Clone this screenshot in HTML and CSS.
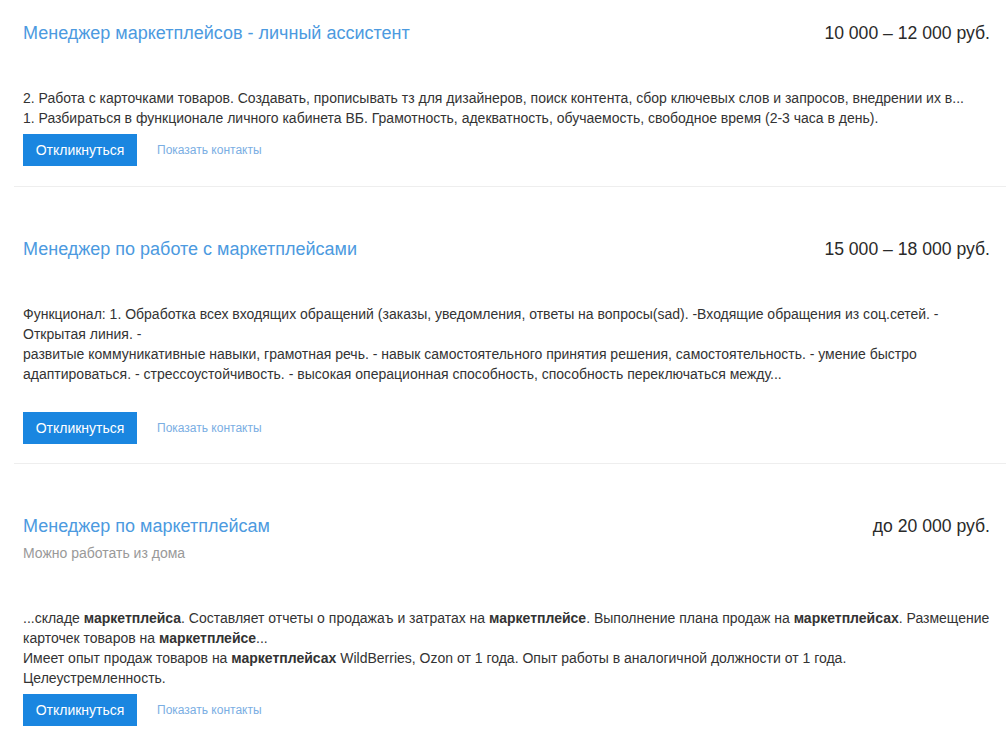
FILE: index.html
```html
<!DOCTYPE html>
<html lang="ru">
<head>
<meta charset="utf-8">
<title>Вакансии</title>
<link rel="stylesheet" href="styles.css">
</head>
<body>
<div class="list">
  <div class="card">
    <div class="head">
      <a class="title" href="#">Менеджер маркетплейсов - личный ассистент</a>
      <div class="price">10&nbsp;000 – 12&nbsp;000 руб.</div>
    </div>
    <div class="body">
      <div class="line">2. Работа с карточками товаров. Создавать, прописывать тз для дизайнеров, поиск контента, сбор ключевых слов и запросов, внедрении их в...</div>
      <div class="line">1. Разбираться в функционале личного кабинета ВБ. Грамотность, адекватность, обучаемость, свободное время (2-3 часа в день).</div>
    </div>
    <div class="actions">
      <button class="btn">Откликнуться</button>
      <a class="contacts" href="#">Показать контакты</a>
    </div>
  </div>
  <div class="card card-tight">
    <div class="head">
      <a class="title" href="#">Менеджер по работе с маркетплейсами</a>
      <div class="price">15&nbsp;000 – 18&nbsp;000 руб.</div>
    </div>
    <div class="body body-tall">
      <div class="line">Функционал: 1. Обработка всех входящих обращений (заказы, уведомления, ответы на вопросы(sad). -Входящие обращения из соц.сетей. - Открытая линия. -</div>
      <div class="line">развитые коммуникативные навыки, грамотная речь. - навык самостоятельного принятия решения, самостоятельность. - умение быстро адаптироваться. - стрессоустойчивость. - высокая операционная способность, способность переключаться между...</div>
    </div>
    <div class="actions">
      <button class="btn">Откликнуться</button>
      <a class="contacts" href="#">Показать контакты</a>
    </div>
  </div>
  <div class="card">
    <div class="head">
      <a class="title" href="#">Менеджер по маркетплейсам</a>
      <div class="price">до 20&nbsp;000 руб.</div>
    </div>
    <div class="sub">Можно работать из дома</div>
    <div class="body body-sub">
      <div class="line">...складе <b>маркетплейса</b>. Составляет отчеты о продажаъ и затратах на <b>маркетплейсе</b>. Выполнение плана продаж на <b>маркетплейсах</b>. Размещение карточек товаров на <b>маркетплейсе</b>...</div>
      <div class="line">Имеет опыт продаж товаров на <b>маркетплейсах</b> WildBerries, Ozon от 1 года. Опыт работы в аналогичной должности от 1 года. Целеустремленность.</div>
    </div>
    <div class="actions">
      <button class="btn">Откликнуться</button>
      <a class="contacts" href="#">Показать контакты</a>
    </div>
  </div>
</div>
</body>
</html>
```
FILE: styles.css
```css
html, body {
  margin: 0;
  padding: 0;
  background: #fff;
}
body {
  font-family: Arial, "Liberation Sans", sans-serif;
  color: #333;
  overflow: hidden;
}
.list {
  display: flex;
  flex-direction: column;
  gap: 29px;
  margin-left: 14px;
}
.card {
  padding: 22px 16px 20px 9px;
  border-bottom: 1px solid #eeeeee;
}
.card-tight {
  padding-bottom: 19px;
}
.head {
  display: flex;
  justify-content: space-between;
  align-items: center;
  height: 22px;
}
.title {
  font-size: 18px;
  line-height: 22px;
  color: #4c9ae0;
  text-decoration: none;
}
.price {
  font-size: 17.6px;
  line-height: 22px;
  color: #2a2a2a;
}
.sub {
  margin-top: 6px;
  font-size: 14px;
  line-height: 20px;
  color: #999;
}
.body {
  margin-top: 44px;
  font-size: 14px;
  line-height: 20px;
  color: #333;
}
.body b {
  font-weight: bold;
}
.body-tall {
  margin-bottom: 28px;
}
.body-sub {
  margin-top: 45px;
  margin-bottom: 1px;
}
.actions {
  margin-top: 6px;
  display: flex;
  align-items: center;
  gap: 20px;
}
.btn {
  height: 32px;
  width: 114px;
  border: 0;
  background: #1a86e0;
  color: #fff;
  font-family: Arial, "Liberation Sans", sans-serif;
  font-size: 14px;
  padding: 0;
  cursor: pointer;
}
.contacts {
  font-size: 12px;
  color: #7aaee3;
  text-decoration: none;
}
```
